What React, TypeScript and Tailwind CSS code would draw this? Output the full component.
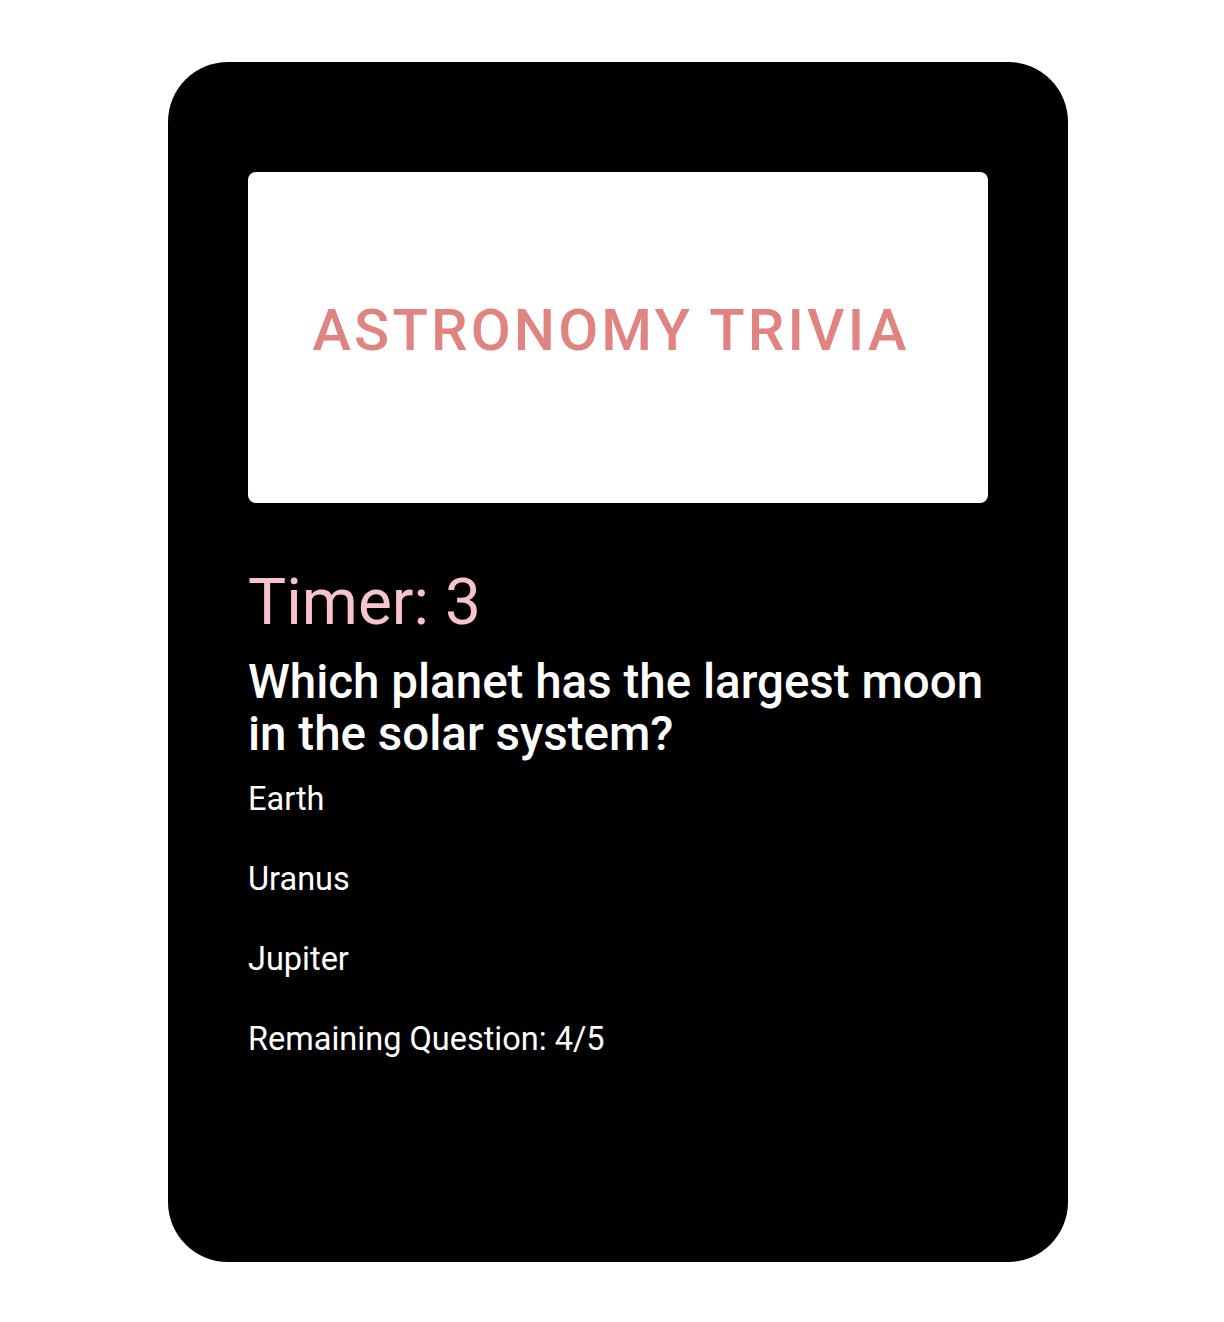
const answers = ['Earth', 'Uranus', 'Jupiter']

export default function App() {
  return (
    <div className="flex min-h-screen justify-center bg-white pl-3 pt-[62px] font-['Roboto',sans-serif]">
      <div className="flex h-[1200px] w-[900px] flex-col rounded-[60px] bg-black px-20 pt-[110px]">
        <div className="flex h-[331px] items-center justify-center rounded-lg bg-white pb-[14px] pr-[14px]">
          <h1 className="text-[58px] font-medium tracking-[0.055em] text-[#e08481]">
            ASTRONOMY TRIVIA
          </h1>
        </div>

        <p className="mt-[68px] text-[64px] leading-[64px] text-[#f7c3cc]">Timer: 3</p>

        <h2 className="mt-[21px] text-[47.5px] font-medium leading-[52px] text-white">
          Which planet has the largest moon in the solar system?
        </h2>

        <div className="mt-[23px] flex flex-col gap-[48px] text-[32.5px] leading-[32px] text-white">
          {answers.map((a) => (
            <p key={a}>{a}</p>
          ))}
          <p>Remaining Question: 4/5</p>
        </div>
      </div>
    </div>
  )
}
